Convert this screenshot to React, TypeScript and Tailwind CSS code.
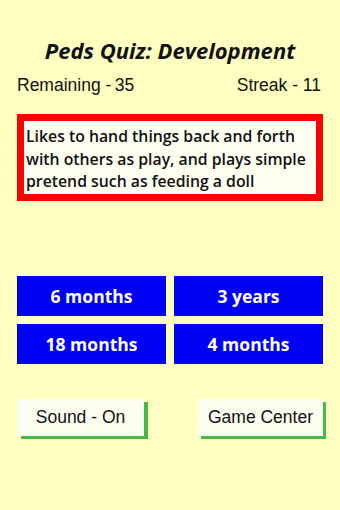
const answers = ['6 months', '3 years', '18 months', '4 months'];

export default function App() {
  return (
    <div className="w-[340px] h-[510px] bg-[#ffffc2] px-[17px] flex flex-col">
      {/* Title */}
      <h1 className="mt-[37px] h-[26px] text-center text-[22px] leading-[26px] font-bold italic text-[#111] font-['Open_Sans',sans-serif]">
        Peds Quiz: Development
      </h1>

      {/* Stats */}
      <div className="mt-[11px] flex justify-between text-[17.5px] leading-[22px] text-[#111] font-['Liberation_Sans',Arial,sans-serif]">
        <span>Remaining -&#8201;35</span>
        <span className="pr-[2px]">Streak - 11</span>
      </div>

      {/* Question */}
      <div className="mt-[18px] h-[87px] border-[7px] border-[#ff0000] bg-[#fffff2] px-[2px] pt-[4px]">
        <p className="text-[15.8px] leading-[22.5px] font-semibold text-[#111] font-['Open_Sans',sans-serif]">
          Likes to hand things back and forth with others as play, and plays simple pretend such as feeding a doll
        </p>
      </div>

      {/* Answers */}
      <div className="mt-[75px] grid grid-cols-2 gap-x-[8px] gap-y-[8px]">
        {answers.map((a) => (
          <button
            key={a}
            className="h-[40px] bg-[#0000f5] text-white text-[17.5px] font-bold font-['Open_Sans',sans-serif]"
          >
            {a}
          </button>
        ))}
      </div>

      {/* Bottom buttons */}
      <div className="mt-[35px] flex justify-between">
        <button className="w-[127px] h-[37px] bg-[#fdfdef] shadow-[4px_3px_0_#47b847] text-[17.5px] text-[#111] font-['Liberation_Sans',Arial,sans-serif]">
          Sound - On
        </button>
        <button className="w-[125px] h-[37px] bg-[#fdfdef] shadow-[3px_3px_0_#47b847] text-[17.5px] text-[#111] font-['Liberation_Sans',Arial,sans-serif]">
          Game Center
        </button>
      </div>
    </div>
  );
}
